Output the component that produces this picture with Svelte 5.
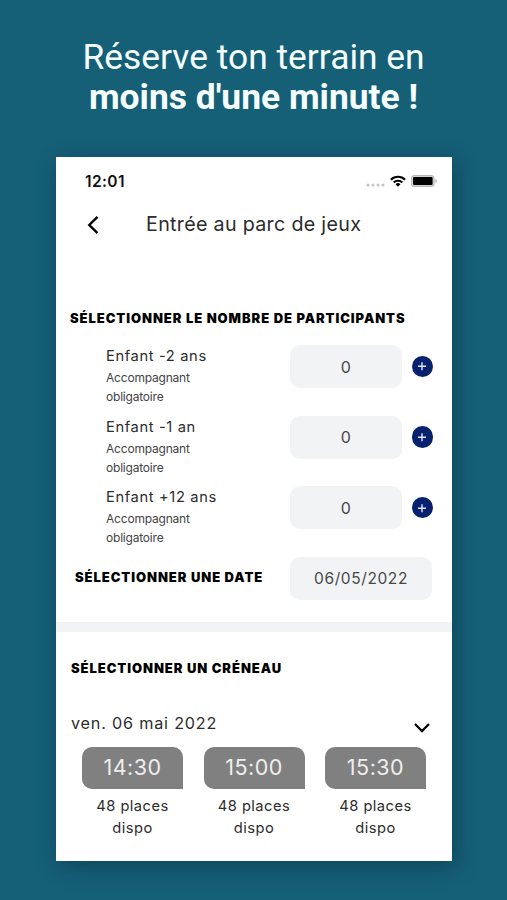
<script>
    let participants = $state([
        { label: "Enfant -2 ans", count: 0 },
        { label: "Enfant -1 an", count: 0 },
        { label: "Enfant +12 ans", count: 0 },
    ]);
    let open = $state(true);

    const slots = ["14:30", "15:00", "15:30"];
</script>

<main>
    <h1>
        <span>Réserve ton terrain en</span>
        <strong>moins d'une minute !</strong>
    </h1>

    <div class="phone">
        <div class="status">
            <span class="clock">12:01</span>
            <svg class="signal" width="19" height="4" viewBox="0 0 19 4">
                <g fill="#c4c4c6">
                    <circle cx="2" cy="2" r="1.5" />
                    <circle cx="7" cy="2" r="1.5" />
                    <circle cx="12" cy="2" r="1.5" />
                    <circle cx="17" cy="2" r="1.5" />
                </g>
            </svg>
            <svg class="wifi" width="16" height="12" viewBox="0 0 16 12">
                <g fill="none" stroke="#000" stroke-width="2.1">
                    <path d="M.9 4.7a10 10 0 0 1 14.2 0" />
                    <path d="M3.7 7.5a6.1 6.1 0 0 1 8.6 0" />
                </g>
                <path d="M8 11.8 5.5 9.3a3.5 3.5 0 0 1 5 0z" />
            </svg>
            <svg class="battery" width="27" height="12" viewBox="0 0 27 12">
                <rect x=".6" y=".6" width="22.4" height="10.8" rx="3" fill="#ddd" stroke="#b5b5b5" stroke-width="1.1" />
                <rect x="2" y="2" width="19.6" height="8" rx="1.2" />
                <path d="M24.3 4v4q1.6-.6 1.6-2t-1.6-2z" fill="#b5b5b5" />
            </svg>
        </div>

        <header>
            <button class="back" aria-label="Retour">
                <svg width="14" height="20" viewBox="0 0 14 20">
                    <path d="M11.5 1.8 3.3 10l8.2 8.2" fill="none" stroke="#000" stroke-width="2.4" />
                </svg>
            </button>
            <h2>Entrée au parc de jeux</h2>
        </header>

        <h3 class="people">Sélectionner le nombre de participants</h3>

        {#each participants as p}
            <div class="row">
                <div class="who">
                    <div class="label">{p.label}</div>
                    <div class="note">Accompagnant<br />obligatoire</div>
                </div>
                <div class="field count">{p.count}</div>
                <button class="plus" aria-label="Ajouter" onclick={() => p.count++}>
                    <svg width="10" height="10" viewBox="0 0 10 10">
                        <path d="M5 1.3v8M1 5.3h8" stroke="#dfe6ff" stroke-width="1.4" />
                    </svg>
                </button>
            </div>
        {/each}

        <div class="date-row">
            <h3 class="date">Sélectionner une date</h3>
            <div class="field day">06/05/2022</div>
        </div>

        <div class="divider"></div>

        <h3 class="slot-title">Sélectionner un créneau</h3>

        <button class="toggle" onclick={() => (open = !open)}>
            <span>ven. 06 mai 2022</span>
            <svg width="18" height="12" viewBox="0 0 18 12">
                <path d="m2 2 7 7 7-7" fill="none" stroke="#000" stroke-width="2.3" />
            </svg>
        </button>

        {#if open}
            <div class="slots">
                {#each slots as slot}
                    <div class="slot">
                        <button>{slot}</button>
                        <p>48 places<br />dispo</p>
                    </div>
                {/each}
            </div>
        {/if}
    </div>
</main>

<style>
    :global(body) {
        margin: 0;
        background: #155f77;
    }

    main {
        box-sizing: border-box;
        height: 900px;
        padding-top: 37px;
        overflow: hidden;
        background: #155f77;
        font-family: Inter, sans-serif;
        color: #2c2c2c;
    }

    h1,
    h2,
    h3,
    p {
        margin: 0;
    }

    button {
        padding: 0;
        border: 0;
        background: none;
        font: inherit;
        color: inherit;
    }

    svg {
        display: block;
    }

    h1 {
        height: 120px;
        font-family: Roboto, sans-serif;
        font-size: 35.4px;
        line-height: 40px;
        font-weight: 400;
        text-align: center;
        color: #f5feff;
    }

    h1 span,
    h1 strong {
        display: block;
    }

    .phone {
        box-sizing: border-box;
        width: 396px;
        height: 704px;
        margin-left: 56px;
        background: #fff;
        box-shadow: 4px 5px 20px rgba(0, 25, 45, 0.36);
    }

    .status {
        display: flex;
        align-items: center;
        height: 48px;
        padding: 0 14px 0 29px;
    }

    .clock {
        flex: 1;
        font-size: 15.5px;
        font-weight: 600;
        letter-spacing: 0.4px;
        color: #111;
    }

    .signal {
        margin: 7px 5px 0 0;
    }

    .wifi {
        margin-right: 5px;
    }

    header {
        display: flex;
        align-items: center;
        height: 40px;
        padding-left: 30px;
    }

    .back {
        width: 60px;
    }

    h2 {
        padding-bottom: 2px;
        font-size: 19.7px;
        line-height: 24px;
        font-weight: 400;
        letter-spacing: 0.3px;
    }

    h3 {
        font-size: 13px;
        line-height: 20px;
        font-weight: 900;
        letter-spacing: 0.94px;
        text-transform: uppercase;
        white-space: nowrap;
        color: #000;
    }

    .people {
        padding: 63px 0 0 14px;
        height: 37px;
    }

    .row {
        display: flex;
        height: 70.7px;
        padding-left: 50px;
    }

    .who {
        width: 184px;
    }

    .label {
        font-size: 14.7px;
        line-height: 22px;
        letter-spacing: 0.63px;
    }

    .note {
        padding-top: 1px;
        font-size: 12px;
        line-height: 19px;
        letter-spacing: -0.2px;
        color: #444;
    }

    .field {
        display: flex;
        align-items: center;
        justify-content: center;
        height: 43px;
        border-radius: 10px;
        background: #f2f3f5;
        color: #484848;
    }

    .count {
        width: 111.5px;
        font-size: 16px;
    }

    .plus {
        display: flex;
        align-items: center;
        justify-content: center;
        width: 21.5px;
        height: 21.5px;
        margin: 10.5px 0 0 10px;
        border-radius: 50%;
        background: #08216f;
    }

    .date-row {
        display: flex;
        align-items: center;
        height: 43px;
        padding-left: 19px;
    }

    .date {
        width: 215px;
        padding-bottom: 3px;
    }

    .day {
        width: 142px;
        font-size: 15.5px;
        letter-spacing: 0.6px;
    }

    .divider {
        height: 10px;
        margin: 22px 0 26px;
        background: #f2f3f5;
    }

    .slot-title {
        padding-left: 15px;
    }

    .toggle {
        display: flex;
        align-items: center;
        justify-content: space-between;
        width: 100%;
        height: 24px;
        margin-top: 33px;
        padding: 0 21px 0 15px;
        font-size: 16.2px;
        letter-spacing: 0.8px;
    }

    .toggle svg {
        margin-top: 9px;
    }

    .slots {
        display: flex;
        gap: 20.5px;
        padding: 12px 0 0 26px;
    }

    .slot {
        width: 101px;
        text-align: center;
    }

    .slot button {
        width: 100%;
        height: 42px;
        padding-bottom: 2px;
        border-radius: 10px 10px 0 10px;
        background: #808080;
        font-size: 21.5px;
        letter-spacing: 0.5px;
        color: #eee;
    }

    .slot p {
        padding-top: 5.5px;
        font-size: 14.7px;
        line-height: 22.5px;
        letter-spacing: 0.45px;
    }
</style>
